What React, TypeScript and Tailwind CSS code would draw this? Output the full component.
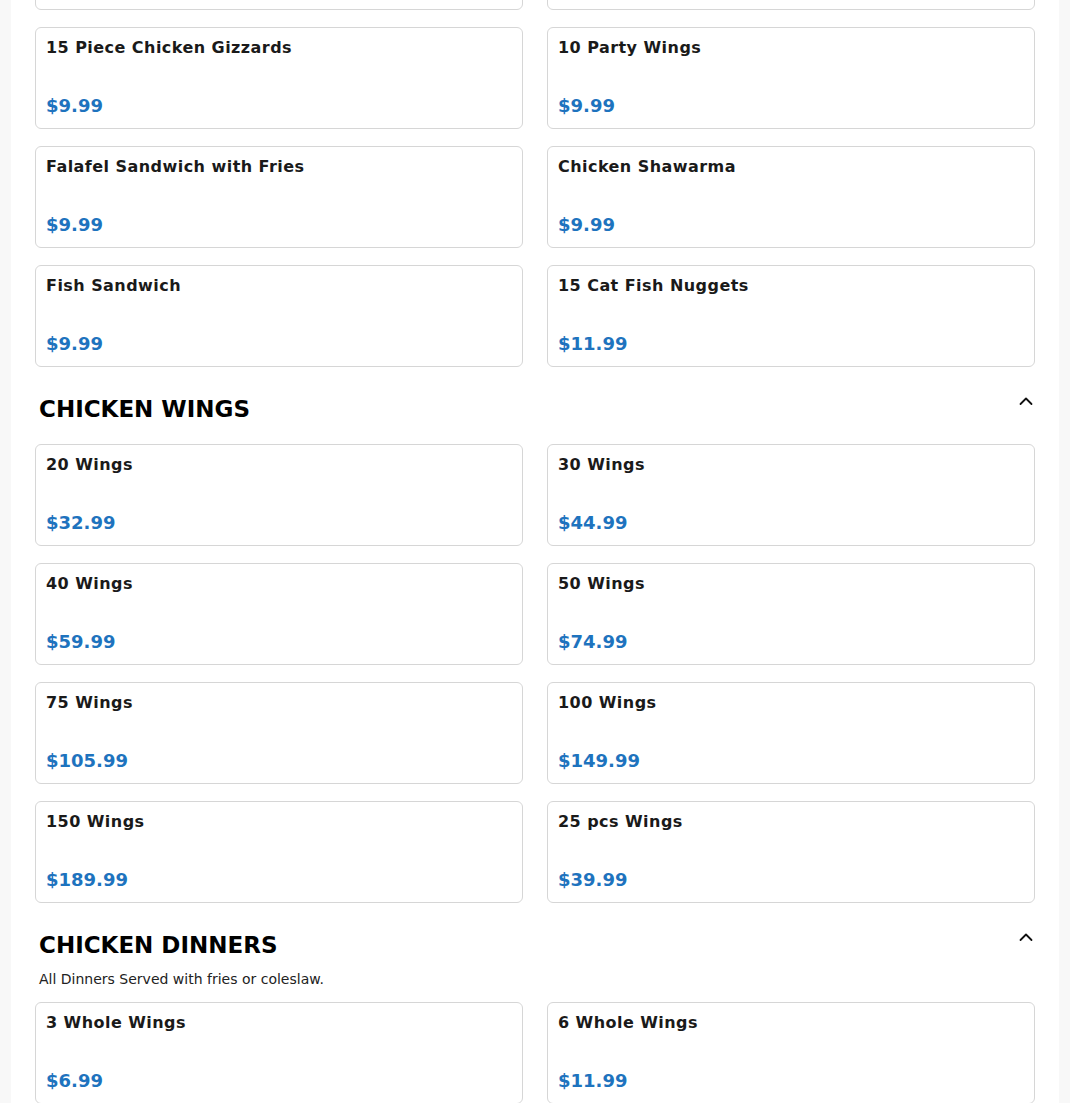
import React from "react";

type Item = { name: string; price: string };

const Card = ({ item }: { item: Item }) => (
  <div className="h-[102px] flex flex-col justify-between rounded-md border border-[#d6d6d6] bg-white px-[10px] pt-[11px] pb-[9px]">
    <div className="text-[16px] leading-[18px] font-bold text-[#1a1a1a] tracking-[0.45px]">{item.name}</div>
    <div className="text-[18px] leading-[26px] font-bold text-[#1e73be]">{item.price}</div>
  </div>
);

const Grid = ({ items }: { items: Item[] }) => (
  <div className="grid grid-cols-2 gap-x-6 gap-y-[17px]">
    {items.map((it, i) => (
      <Card key={i} item={it} />
    ))}
  </div>
);

const Chevron = () => (
  <svg width="16" height="16" viewBox="0 0 16 16" fill="none" className="-mr-[3px]">
    <path d="M2.5 11 L8 5.5 L13.5 11" stroke="#111" strokeWidth="1.8" strokeLinecap="round" strokeLinejoin="round" />
  </svg>
);

const Heading = ({ title, desc }: { title: string; desc?: string }) => (
  <div className="mt-[26px] mb-[19px] px-1">
    <div className="flex items-start justify-between">
      <h2 className="text-[23px] leading-[32px] font-bold text-black">{title}</h2>
      <Chevron />
    </div>
    {desc && <p className="text-[14px] leading-[20px] text-[#222] mt-[8px] -mb-[6px]">{desc}</p>}
  </div>
);

export default function App() {
  const prev: Item[] = [
    { name: "Chicken Tenders", price: "$9.99" },
    { name: "Chicken Nuggets", price: "$9.99" },
  ];
  const specials: Item[] = [
    { name: "15 Piece Chicken Gizzards", price: "$9.99" },
    { name: "10 Party Wings", price: "$9.99" },
    { name: "Falafel Sandwich with Fries", price: "$9.99" },
    { name: "Chicken Shawarma", price: "$9.99" },
    { name: "Fish Sandwich", price: "$9.99" },
    { name: "15 Cat Fish Nuggets", price: "$11.99" },
  ];
  const wings: Item[] = [
    { name: "20 Wings", price: "$32.99" },
    { name: "30 Wings", price: "$44.99" },
    { name: "40 Wings", price: "$59.99" },
    { name: "50 Wings", price: "$74.99" },
    { name: "75 Wings", price: "$105.99" },
    { name: "100 Wings", price: "$149.99" },
    { name: "150 Wings", price: "$189.99" },
    { name: "25 pcs Wings", price: "$39.99" },
  ];
  const dinners: Item[] = [
    { name: "3 Whole Wings", price: "$6.99" },
    { name: "6 Whole Wings", price: "$11.99" },
    { name: "9 Whole Wings", price: "$15.99" },
    { name: "12 Whole Wings", price: "$19.99" },
  ];
  return (
    <div className="h-[1103px] overflow-hidden bg-[#f8f8f8]" style={{ fontFamily: '"DejaVu Sans", sans-serif' }}>
      <div className="mx-[11px] bg-white px-6 -mt-[92px]">
        <div className="flex flex-col gap-y-[17px]">
          <Grid items={prev} />
          <Grid items={specials} />
        </div>
        <Heading title="CHICKEN WINGS" />
        <Grid items={wings} />
        <Heading title="CHICKEN DINNERS" desc="All Dinners Served with fries or coleslaw." />
        <Grid items={dinners} />
      </div>
    </div>
  );
}
